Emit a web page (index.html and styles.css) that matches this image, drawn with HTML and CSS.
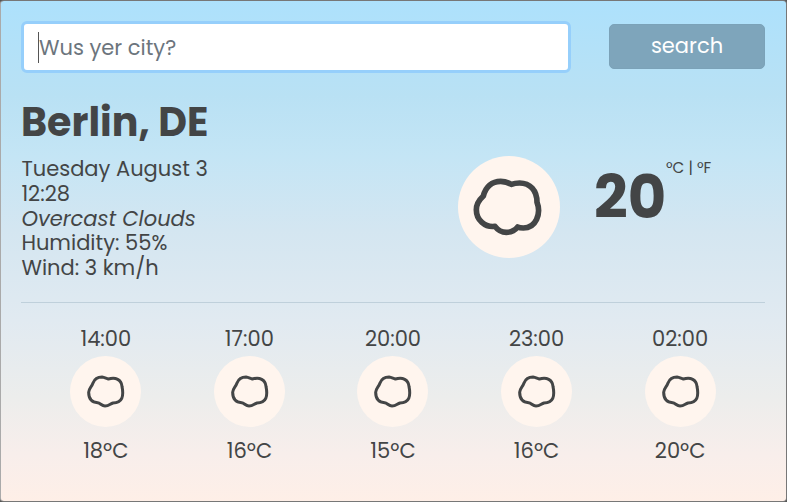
FILE: index.html
```html
<!DOCTYPE html>
<html lang="en">
<head>
<meta charset="utf-8">
<title>Weather</title>
<link rel="stylesheet" href="styles.css">
</head>
<body>
<svg class="defs" aria-hidden="true">
  <symbol id="cloud" viewBox="54 48 306 306">
    <path d="M130 168C137 140 156 124 182 124C196 124 204 127 214 133C222 130 230 129 239 129C270 129 291 151 291 187C304 221 288 264 250 264C243 264 237 263 233 261C224 272 213 277 199 277C184 277 174 271 165 259C135 263 109 240 109 209C109 193 116 181 130 168Z"/>
  </symbol>
  <symbol id="cloud-small" viewBox="63 107 211 213">
    <path d="M131 188C136 175 146 170 158 170C165 171 170 174 177 176C199 170 216 177 218 198C224 228 219 247 191 248C183 250 179 257 167 257C157 257 153 248 145 247C126 246 118 235 118 216C118 204 127 200 131 188Z"/>
  </symbol>
</svg>
<main class="app">
  <form class="search">
    <label class="field"><span class="placeholder">Wus yer city?</span></label>
    <button class="submit" type="button">search</button>
  </form>
  <h1 class="city">Berlin, DE</h1>
  <section class="current">
    <ul class="details">
      <li class="date">Tuesday August 3</li>
      <li class="time">12:28</li>
      <li class="sky">Overcast Clouds</li>
      <li class="humidity">Humidity: 55%</li>
      <li class="wind">Wind: 3 km/h</li>
    </ul>
    <div class="disc"><svg><use href="#cloud"/></svg></div>
    <strong class="temperature">20</strong>
    <span class="units">ºC | ºF</span>
  </section>
  <section class="forecast">
    <div class="hour"><span class="clock">14:00</span><div class="disc small"><svg><use href="#cloud-small"/></svg></div><span class="degrees">18ºC</span></div>
    <div class="hour"><span class="clock">17:00</span><div class="disc small"><svg><use href="#cloud-small"/></svg></div><span class="degrees">16ºC</span></div>
    <div class="hour"><span class="clock">20:00</span><div class="disc small"><svg><use href="#cloud-small"/></svg></div><span class="degrees">15ºC</span></div>
    <div class="hour"><span class="clock">23:00</span><div class="disc small"><svg><use href="#cloud-small"/></svg></div><span class="degrees">16ºC</span></div>
    <div class="hour"><span class="clock">02:00</span><div class="disc small"><svg><use href="#cloud-small"/></svg></div><span class="degrees">20ºC</span></div>
  </section>
</main>
</body>
</html>
```
FILE: styles.css
```css
* { box-sizing: border-box; }
html { background: #555; }
body { margin: 0; font-family: Poppins, Inter, sans-serif; font-size: 21px; font-weight: 400; color: #434546; }
.defs { display: block; width: 0; height: 0; }
.app {
  width: 787px; height: 502px; padding: 20px 21px 0 20px; overflow: hidden;
  border: 1px solid #777; border-left-color: #aaa; border-radius: 4px;
  background: linear-gradient(#ade1fc 0, #b9e1f4 95px, #c4e5f5 155px, #d4e6f1 230px, #e1eaf1 320px, #ecedec 395px, #f8eeeb 455px, #feefe7 500px);
}
.search { display: flex; height: 52px; justify-content: space-between; }
.field { display: flex; align-items: center; width: 550px; height: 52px; padding-left: 14px; background: #fff; border: 3px solid #96cffb; border-radius: 6px; color: #6c757d; }
.placeholder { border-left: 1px solid #555; height: 31px; line-height: 32px; white-space: nowrap; }
.submit { width: 156px; height: 45px; margin-top: 3px; padding: 0 0 3px; border: 1px solid #7ba2b8; border-radius: 5px; background: #7ea5bb; color: #fff; font: inherit; }
.city { margin: 28px 0 0; height: 42px; line-height: 42px; font-size: 39.6px; font-weight: 700; white-space: nowrap; }
.current { display: flex; height: 160px; border-bottom: 1px solid #bfd0db; }
.details { list-style: none; width: 437px; margin: 0; padding: 14px 0 0 .4px; line-height: 24.8px; }
.sky { font-style: italic; }
.disc { width: 102px; height: 102px; margin-top: 13px; border-radius: 50%; background: #fff5ee; flex: none; }
.disc svg { display: block; width: 100%; height: 100%; fill: none; stroke: #434546; stroke-width: 17; stroke-linejoin: round; }
.temperature { width: 72px; margin: 20px 0 0 34px; height: 70px; line-height: 70px; font-size: 59px; font-weight: 700; }
.units { margin-top: 15px; font-size: 15.2px; line-height: 20px; white-space: nowrap; }
.forecast { display: flex; padding: 23px 13px 0 13px; }
.hour { flex: 1; display: flex; flex-direction: column; align-items: center; }
.clock, .degrees { height: 26px; line-height: 26px; }
.small { width: 71px; height: 71px; margin-top: 4px; }
.small svg { stroke-width: 9; }
.degrees { margin-top: 11px; }
```
